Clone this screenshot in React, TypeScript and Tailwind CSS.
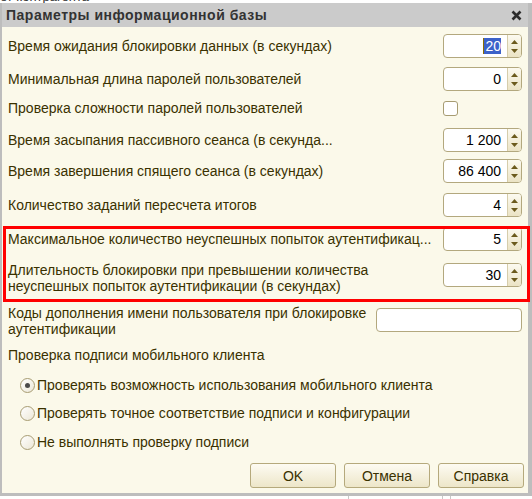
import React from "react";

const label = "text-[14px] leading-4 text-[#3a3100] whitespace-nowrap";

function Arrow({ down }: { down?: boolean }) {
  return (
    <svg width="7" height="4" viewBox="0 0 7 4" className="block">
      {down ? (
        <path d="M0 0H7L3.5 4Z" fill="#6b5a1c" />
      ) : (
        <path d="M0 4H7L3.5 0Z" fill="#6b5a1c" />
      )}
    </svg>
  );
}

function Spin({ value, selected }: { value: string; selected?: boolean }) {
  return (
    <div className="flex h-6 w-[79px] shrink-0 overflow-hidden rounded-[4px] border border-[#b3a87e] bg-white">
      <div className="flex flex-1 items-center justify-end pr-[6px] text-[14px] leading-4 text-black">
        {selected ? (
          <span className="border-l border-[#8a6d00] bg-[#3c62c9] pl-px text-white">{value}</span>
        ) : (
          value
        )}
      </div>
      <div className="flex w-[14px] flex-col items-center justify-center gap-[5px] border-l border-[#d6cdab] bg-gradient-to-b from-[#fcfaf0] to-[#ebe3c4]">
        <Arrow />
        <Arrow down />
      </div>
    </div>
  );
}

function Radio({ checked, text, className }: { checked?: boolean; text: string; className?: string }) {
  return (
    <div className={`flex h-5 items-center pl-[12px] ${className ?? ""}`}>
      <div className="grid h-[15px] w-[15px] place-items-center rounded-full border border-[#a79c72] bg-gradient-to-br from-white to-[#ece7d6]">
        {checked && <div className="h-[5px] w-[5px] rounded-full bg-[#4a4a4a]" />}
      </div>
      <span className={`${label} ml-[2px]`}>{text}</span>
    </div>
  );
}

function Button({ children }: { children: React.ReactNode }) {
  return (
    <div className="grid h-[25px] w-[86px] place-items-center rounded-[3px] border border-[#b5a97c] bg-gradient-to-b from-[#fdfbf2] to-[#ede6c9] text-[14px] leading-4 text-[#3a3100]">
      {children}
    </div>
  );
}

export default function App() {
  return (
    <div className="h-[499px] w-[532px] overflow-hidden bg-white font-['Liberation_Sans',Arial,sans-serif]">
      <div className="flex h-[3px] items-end overflow-hidden">
        <span className="shrink-0 text-[13px] leading-[13px] text-[#333]">ет контрагента</span>
      </div>

      <div className="relative border-b-[3px] border-l-2 border-r-4 border-[#bdbdbd]">
        <div className="flex h-6 items-center justify-between bg-[#cbcbcb] pl-1 pr-[6px]">
          <span className="text-[14px] font-bold tracking-[0.5px] text-[#333]">Параметры информационной базы</span>
          <svg width="11" height="11" viewBox="0 0 11 11">
            <path d="M1.5 1.5L9.5 9.5M9.5 1.5L1.5 9.5" stroke="#2b2b2b" strokeWidth="2.6" />
          </svg>
        </div>

        <div className="flex h-[466px] flex-col bg-[#fbf9ea] pl-[6px] pr-[6px]">
          <div className="mt-[7px] flex h-6 items-center justify-between">
            <span className={label}>Время ожидания блокировки данных (в секундах)</span>
            <Spin value="20" selected />
          </div>
          <div className="mt-[9px] flex h-6 items-center justify-between">
            <span className={label}>Минимальная длина паролей пользователей</span>
            <Spin value="0" />
          </div>
          <div className="mt-[5px] flex h-6 items-center justify-between">
            <span className={label}>Проверка сложности паролей пользователей</span>
            <div className="mr-[64px] h-[15px] w-[15px] rounded-[3px] border border-[#a79c72] bg-white" />
          </div>
          <div className="mt-[8px] flex h-6 items-center justify-between">
            <span className={label}>Время засыпания пассивного сеанса (в секунда...</span>
            <Spin value="1 200" />
          </div>
          <div className="mt-[7px] flex h-6 items-center justify-between">
            <span className={label}>Время завершения спящего сеанса (в секундах)</span>
            <Spin value="86 400" />
          </div>
          <div className="mt-[10px] flex h-6 items-center justify-between">
            <span className={label}>Количество заданий пересчета итогов</span>
            <Spin value="4" />
          </div>
          <div className="mt-[10px] flex h-6 items-center justify-between">
            <span className={label}>Максимальное количество неуспешных попыток аутентификац...</span>
            <Spin value="5" />
          </div>
          <div className="mt-[11px] flex h-8 items-start justify-between">
            <span className={label}>
              Длительность блокировки при превышении количества
              <br />
              неуспешных попыток аутентификации (в секундах)
            </span>
            <div className="mt-px">
              <Spin value="30" />
            </div>
          </div>
          <div className="mt-[11px] flex h-8 items-start justify-between">
            <span className={label}>
              Коды дополнения имени пользователя при блокировке
              <br />
              аутентификации
            </span>
            <div className="mt-[3px] h-6 w-[146px] shrink-0 rounded-[4px] border border-[#b3a87e] bg-white" />
          </div>
          <div className="mt-[10px] flex h-4 items-center">
            <span className={label}>Проверка подписи мобильного клиента</span>
          </div>
          <Radio className="mt-[12px]" checked text="Проверять возможность использования мобильного клиента" />
          <Radio className="mt-[8px]" text="Проверять точное соответствие подписи и конфигурации" />
          <Radio className="mt-[9px]" text="Не выполнять проверку подписи" />
          <div className="-mr-[2px] mt-[11px] flex justify-end gap-[8px]">
            <Button>OK</Button>
            <Button>Отмена</Button>
            <Button>Справка</Button>
          </div>
        </div>

        <div className="pointer-events-none absolute left-px top-[223px] h-[76px] w-[527px] border-[3px] border-[#ff0000]" />
      </div>

      <div className="flex h-[3px]">
        <div className="ml-[348px] h-full w-px bg-[#c8c8c8]" />
        <div className="ml-[93px] h-full w-px bg-[#c8c8c8]" />
        <div className="ml-[7px] h-full w-px bg-[#c8c8c8]" />
      </div>
    </div>
  );
}
